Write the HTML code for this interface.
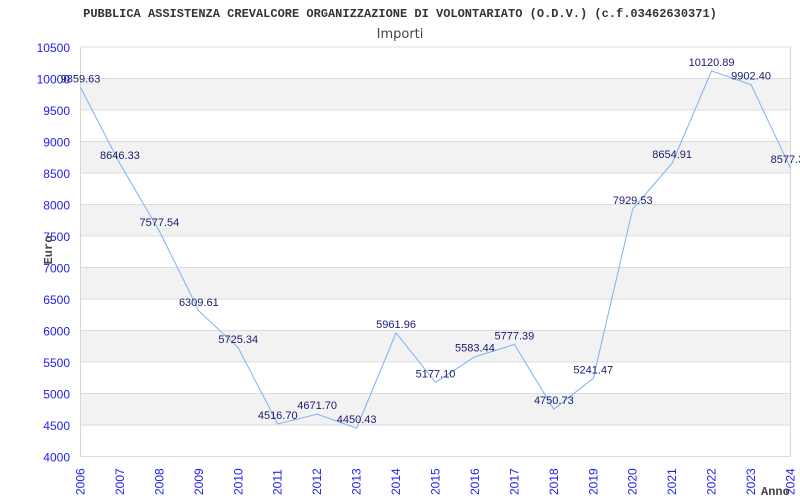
<!DOCTYPE html>
<html><head><meta charset="utf-8"><style>
html,body{margin:0;padding:0;background:#fff;width:800px;height:500px;overflow:hidden}
svg text{font-family:"Liberation Sans",sans-serif}
</style></head><body>
<svg width="800" height="500" xmlns="http://www.w3.org/2000/svg">
<text x="400" y="17" text-anchor="middle" style="font-family:'Liberation Mono',monospace;font-weight:bold;font-size:12px" fill="#333">PUBBLICA ASSISTENZA CREVALCORE ORGANIZZAZIONE DI VOLONTARIATO (O.D.V.) (c.f.03462630371)</text>
<text x="400" y="38" text-anchor="middle" style="font-family:'DejaVu Sans',sans-serif;font-size:13px" fill="#444">Importi</text>
<g id="bands"></g>
<g id="grid"></g>
<g id="plot"></g>
<text x="761" y="495" style="font-family:'Liberation Mono',monospace;font-weight:bold;font-size:12px" fill="#444">Anno</text>
<text transform="translate(52,250) rotate(-90)" text-anchor="middle" style="font-family:'Liberation Mono',monospace;font-weight:bold;font-size:12px" fill="#444">Euro</text>
<script>
var ns="http://www.w3.org/2000/svg",s=document.querySelector('svg');
function el(t,a,p,txt){var e=document.createElementNS(ns,t);for(var k in a)e.setAttribute(k,a[k]);if(txt!=null)e.textContent=txt;(p||s).appendChild(e);return e;}
var L=80.5,R=790.5,T=47,B=456.5;
function Y(v){return B-(v-4000)*(B-T)/6500;}
function X(i){return L+i*(R-L)/18;}
var bands=document.getElementById('bands'),grid=document.getElementById('grid'),plot=document.getElementById('plot');
for(var v=4500;v<10500;v+=1000){el('rect',{x:L,y:Y(v+500),width:R-L,height:Y(v)-Y(v+500),fill:'#f2f2f2'},bands);}
for(var v=4000;v<=10500;v+=500){el('line',{x1:L,x2:R,y1:Y(v),y2:Y(v),stroke:'#dcdcdc','stroke-width':1},grid);
el('text',{x:70,y:Y(v)+5,'text-anchor':'end','font-size':'12',fill:'#2020ee'},grid,String(v));}
el('line',{x1:L,x2:L,y1:T,y2:B,stroke:'#d6d6d6'},grid);
el('line',{x1:R,x2:R,y1:T,y2:B,stroke:'#d6d6d6'},grid);
var d=[9859.63,8646.33,7577.54,6309.61,5725.34,4516.70,4671.70,4450.43,5961.96,5177.10,5583.44,5777.39,4750.73,5241.47,7929.53,8654.91,10120.89,9902.40,8577.30];
var pts=d.map(function(v,i){return X(i)+','+Y(v)}).join(' ');
el('polyline',{points:pts,fill:'none',stroke:'#7ab4f0','stroke-width':1},plot);
d.forEach(function(v,i){el('text',{x:X(i),y:Y(v)-5,'text-anchor':'middle','font-size':'11',fill:'#1a1a70'},plot,v.toFixed(2));
el('text',{transform:'translate('+(X(i)+4)+',495) rotate(-90)','font-size':'12',fill:'#2020ee'},plot,String(2006+i));});
</script>
</svg>
</body></html>
